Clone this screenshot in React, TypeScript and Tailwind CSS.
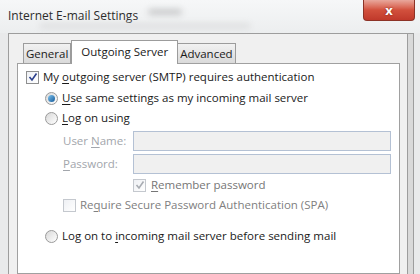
import { ReactNode } from "react";

function Check({ on, dim }: { on?: boolean; dim?: boolean }) {
  return (
    <span
      className={`flex h-[13px] w-[13px] shrink-0 items-center justify-center border bg-gradient-to-br from-[#eef0f4] to-white ${
        dim ? "border-[#c4c8ce]" : "border-[#8e8f8f]"
      }`}
    >
      {on && (
        <svg width="10" height="10" viewBox="0 0 10 10">
          <path
            d="M1.5 5 L4 8 L8.5 1.5"
            fill="none"
            stroke={dim ? "#a8acb2" : "#2a3f8c"}
            strokeWidth="1.6"
          />
        </svg>
      )}
    </span>
  );
}

function Radio({ on }: { on?: boolean }) {
  return (
    <span className="flex h-[13px] w-[13px] shrink-0 items-center justify-center rounded-full border border-[#9a9a9a] bg-gradient-to-br from-[#d8d8d8] to-white">
      {on && (
        <span className="h-[7px] w-[7px] rounded-full bg-gradient-to-br from-[#7fc4ef] to-[#0d5a99]" />
      )}
    </span>
  );
}

function U({ children }: { children: ReactNode }) {
  return <span className="underline underline-offset-2">{children}</span>;
}

export default function App() {
  return (
    <div
      className="h-[274px] w-[420px] overflow-hidden bg-[#e9eaeb] text-[11.5px] leading-[16px] text-[#1a1a1a]"
      style={{ fontFamily: '"Open Sans", "Noto Sans", sans-serif' }}
    >
      {/* title bar */}
      <div className="relative flex h-[33px] items-start bg-gradient-to-b from-[#f6f7f8] to-[#eceeef]">
        <div className="pl-[8px] pt-[8px] text-[12px] text-[#2b2b2b]">Internet E-mail Settings</div>
        <div className="ml-[10px] mt-[9px] h-[6px] w-[34px] rounded-full bg-[#c8c9ca] blur-[3px]" />
        <div className="absolute left-[40px] top-[24px] h-[4px] w-[210px] rounded-full bg-[#d8d9da] blur-[3px]" />
        <div className="absolute right-[5px] top-0 flex h-[21px] w-[52px] items-center justify-center rounded-b-[4px] border border-t-0 border-[#8c3226] bg-gradient-to-b from-[#e8a79c] via-[#d2503d] to-[#c0392b]">
          <span className="text-[13px] font-bold leading-none text-white [text-shadow:0_0_2px_#7a1d12]">x</span>
        </div>
      </div>

      {/* dialog body */}
      <div className="ml-[8px] mr-[6px] flex h-[241px] border-l border-t border-r border-[#9d9d9d] bg-[#f0f0f0]">
        <div className="flex flex-1 flex-col pl-[8px] pr-[7px] pt-[6px]">
          {/* tabs */}
          <div className="flex h-[23px] items-end">
            <div className="ml-[6px] flex h-[20px] items-center border border-b-0 border-[#9c9c9c] bg-gradient-to-b from-[#f2f2f2] to-[#dadada] px-[2px]">
              General
            </div>
            <div className="relative z-10 -mb-px flex h-[24px] items-center border border-b-0 border-[#9c9c9c] bg-white px-[9px] pb-[2px]">
              Outgoing Server
            </div>
            <div className="flex h-[20px] items-center border border-b-0 border-l-0 border-[#9c9c9c] bg-gradient-to-b from-[#f2f2f2] to-[#dadada] px-[2px]">
              Advanced
            </div>
          </div>

          {/* panel */}
          <div className="flex flex-1 flex-col border border-[#a0a0a0] bg-white pl-[8px] pt-[5px]">
            <div className="flex items-center gap-[4px]">
              <Check on />
              <span>
                My <U>o</U>utgoing server (SMTP) requires authentication
              </span>
            </div>

            <div className="ml-[19px] mt-[5px] flex items-center gap-[4px]">
              <Radio on />
              <span>
                <U>U</U>se same settings as my incoming mail server
              </span>
            </div>
            <div className="ml-[19px] mt-[4px] flex items-center gap-[4px]">
              <Radio />
              <span>
                <U>L</U>og on using
              </span>
            </div>

            <div className="ml-[37px] mr-[8px] mt-[5px] flex flex-col gap-[3px] text-[#a2a6ac]">
              <div className="flex items-center">
                <span className="w-[70px]">
                  User <U>N</U>ame:
                </span>
                <div className="h-[20px] flex-1 border border-[#b4c1d4] bg-[#f0f0f0]" />
              </div>
              <div className="flex items-center">
                <span className="w-[70px]">
                  <U>P</U>assword:
                </span>
                <div className="h-[20px] flex-1 border border-[#b4c1d4] bg-[#f0f0f0]" />
              </div>
              <div className="ml-[70px] flex items-center gap-[5px] text-[#767676]">
                <Check on dim />
                <span>
                  <U>R</U>emember password
                </span>
              </div>
              <div className="mt-[1px] flex items-center gap-[4px] text-[#808080]">
                <Check dim />
                <span>
                  Re<U>q</U>uire Secure Password Authentication (SPA)
                </span>
              </div>
            </div>

            <div className="ml-[19px] mt-[15px] flex items-center gap-[4px]">
              <Radio />
              <span>
                Log on to <U>i</U>ncoming mail server before sending mail
              </span>
            </div>
          </div>
        </div>
        <div className="w-[6px] border-l border-[#9d9d9d] bg-[#d9d9d9]" />
      </div>
    </div>
  );
}
